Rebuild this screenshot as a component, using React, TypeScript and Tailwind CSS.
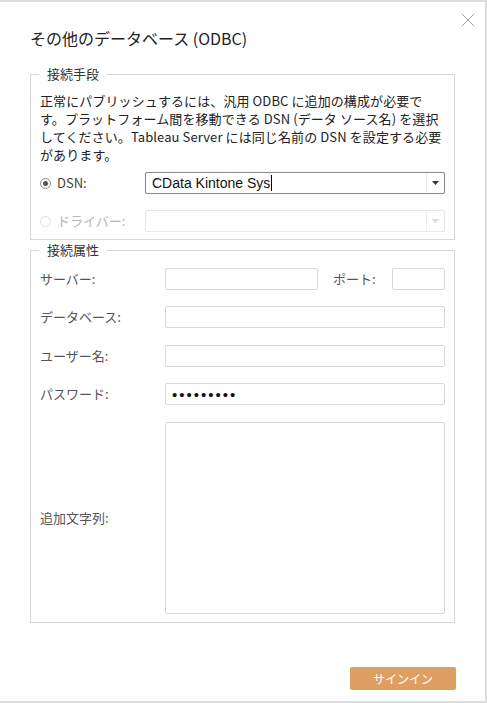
import { X } from 'lucide-react'

const font = { fontFamily: '"Noto Sans CJK JP", "Liberation Sans", sans-serif' }

function Field({ className = '', children }: { className?: string; children?: React.ReactNode }) {
  return (
    <div className={`h-[22px] rounded-[2px] border border-[#d9d9d9] bg-white ${className}`}>{children}</div>
  )
}

function Radio({ checked, disabled }: { checked?: boolean; disabled?: boolean }) {
  return (
    <span
      className={`flex h-[11px] w-[11px] items-center justify-center rounded-full border ${
        disabled ? 'border-[#e0e0e0]' : 'border-[#8a8a8a]'
      }`}
    >
      {checked && <span className="h-[5px] w-[5px] rounded-full bg-[#555]" />}
    </span>
  )
}

function Arrow({ disabled }: { disabled?: boolean }) {
  return (
    <div className="flex h-full w-[18px] items-center justify-center border-l border-[#ececec]">
      <svg width="7" height="4" viewBox="0 0 7 4">
        <path d="M0 0h7L3.5 4z" fill={disabled ? '#d8d8d8' : '#333'} />
      </svg>
    </div>
  )
}

export default function App() {
  return (
    <div className="h-[703px] w-[487px] bg-white text-[13px] text-[#333]" style={font}>
      <div className="relative h-[703px] w-[487px] border-t-2 border-r-2 border-b-2 border-[#dcdcdc] pl-[30px] pr-[30px] pt-[25px]">
        <button className="absolute right-[5px] top-[6px] text-[#9a9a9a]">
          <X className="h-[24px] w-[24px]" strokeWidth={1} />
        </button>

        <h1 className="text-[16px] leading-[22px] text-[#222]">その他のデータベース (ODBC)</h1>

        <fieldset className="mt-[16px] w-[425px] min-w-0 border border-[#d6d6d6] px-[9px] pb-[7px]">
          <legend className="ml-[-1px] px-2 leading-[18px] text-[#333]">接続手段</legend>
          <p className="mt-[9px] whitespace-nowrap leading-[18px] tracking-[0.1px] text-[#222]">
            正常にパブリッシュするには、汎用 ODBC に追加の構成が必要で
            <br />
            す。プラットフォーム間を移動できる DSN (データ ソース名) を選択
            <br />
            してください。Tableau Server には同じ名前の DSN を設定する必要
            <br />
            があります。
          </p>

          <div className="mt-[8px] flex items-center">
            <div className="flex w-[105px] items-center gap-[6px]">
              <Radio checked />
              <span className="text-[#444]">DSN:</span>
            </div>
            <div className="flex h-[22px] flex-1 items-center rounded-[2px] border border-[#8c8c8c] bg-white shadow-[0_0_1px_#bbb]">
              <div className="flex flex-1 items-center pl-[6px] text-[14px] text-[#111]" style={{ fontFamily: '"Liberation Sans", sans-serif' }}>
                CData Kintone Sys
                <span className="ml-[1px] h-[16px] w-px bg-black" />
              </div>
              <Arrow />
            </div>
          </div>

          <div className="mt-[16px] flex items-center">
            <div className="flex w-[105px] items-center gap-[6px]">
              <Radio disabled />
              <span className="text-[#b5b5b5]">ドライバー:</span>
            </div>
            <div className="flex h-[22px] flex-1 items-center justify-end rounded-[2px] border border-[#e6e6e6] bg-white">
              <Arrow disabled />
            </div>
          </div>
        </fieldset>

        <fieldset className="mt-[1px] w-[425px] min-w-0 border border-[#d6d6d6] px-[9px] pb-[8px]">
          <legend className="ml-[-1px] px-2 leading-[18px] text-[#333]">接続属性</legend>

          <div className="mt-[9px] flex items-center">
            <span className="w-[125px] text-[#555]">サーバー:</span>
            <Field className="w-[153px]" />
            <span className="ml-[15px] w-[59px] text-[#555]">ポート:</span>
            <Field className="flex-1" />
          </div>

          <div className="mt-[16px] flex items-center">
            <span className="w-[125px] text-[#555]">データベース:</span>
            <Field className="flex-1" />
          </div>

          <div className="mt-[17px] flex items-center">
            <span className="w-[125px] text-[#555]">ユーザー名:</span>
            <Field className="flex-1" />
          </div>

          <div className="mt-[16px] flex items-center">
            <span className="w-[125px] text-[#555]">パスワード:</span>
            <Field className="flex flex-1 items-center pl-[6px]">
              <span className="text-[15px] leading-none tracking-[2px] text-[#111]" style={{ fontFamily: '"Liberation Sans", sans-serif' }}>
                •••••••••
              </span>
            </Field>
          </div>

          <div className="mt-[17px] flex items-center">
            <span className="w-[125px] text-[#555]">追加文字列:</span>
            <div className="h-[192px] flex-1 rounded-[2px] border border-[#d9d9d9] bg-white" />
          </div>
        </fieldset>

        <div className="mt-[44px] flex justify-end">
          <button className="mr-[-1px] h-[23px] w-[106px] rounded-[2px] bg-[#de9f62] text-[12px] text-white">
            サインイン
          </button>
        </div>
      </div>
    </div>
  )
}
